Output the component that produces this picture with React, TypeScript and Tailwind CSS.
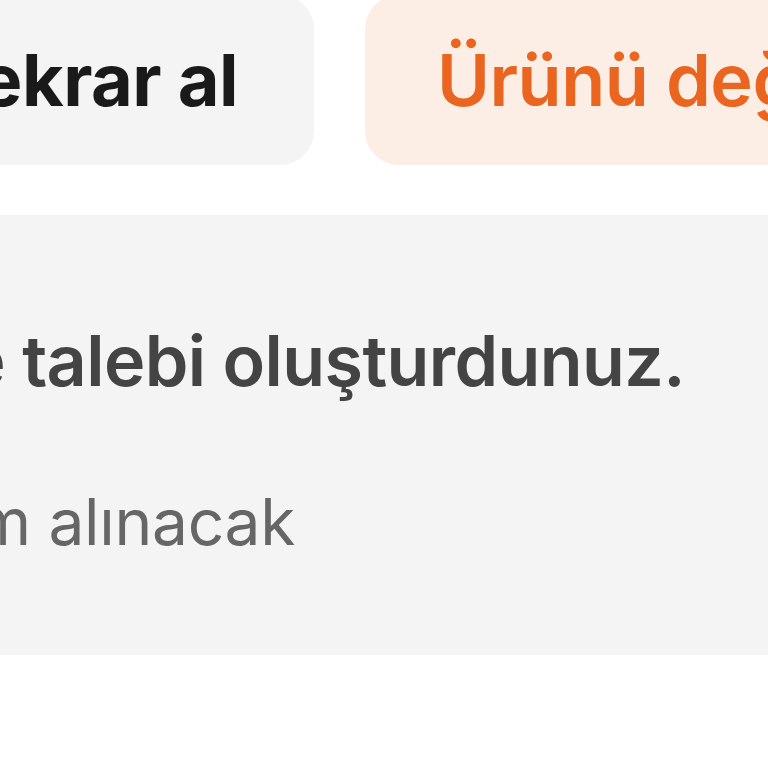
import React from "react";

export default function App() {
  return (
    <div
      className="w-[768px] h-[768px] overflow-hidden bg-white relative"
      style={{ fontFamily: "Inter, 'Noto Sans', sans-serif" }}
    >
      <div className="flex flex-col">
        {/* buttons row */}
        <div className="flex gap-[51px] mt-[-5px] h-[170px]">
          <div className="w-[314px] shrink-0 h-full bg-[#f4f4f4] rounded-r-[34px] flex items-center justify-end pr-[76px] overflow-hidden">
            <span className="whitespace-nowrap text-[72px] leading-[90px] font-bold text-[#1a1a1a] tracking-[-0.5px]">
              Tekrar al
            </span>
          </div>
          <div className="flex-1 min-w-0 h-full bg-[#fdeee5] rounded-l-[34px] flex items-center pl-[72px] overflow-hidden">
            <span className="whitespace-nowrap text-[72px] leading-[90px] font-semibold text-[#ea6520] tracking-[-0.5px]">
              Ürünü değiştir
            </span>
          </div>
        </div>

        {/* info panel */}
        <div className="mt-[50px] h-[440px] bg-[#f4f4f4] flex flex-col pt-[102px] overflow-hidden">
          <div className="w-[685px] flex justify-end">
            <span className="whitespace-nowrap text-[70px] leading-[88px] font-semibold text-[#444444] tracking-[-0.6px]">
              İade talebi oluşturdunuz.
            </span>
          </div>
          <div className="w-[295px] flex justify-end mt-[77px]">
            <span className="whitespace-nowrap text-[64px] leading-[80px] font-normal text-[#666666] tracking-[-0.3px]">
              Ürün adresinizden teslim alınacak
            </span>
          </div>
        </div>
      </div>
    </div>
  );
}
